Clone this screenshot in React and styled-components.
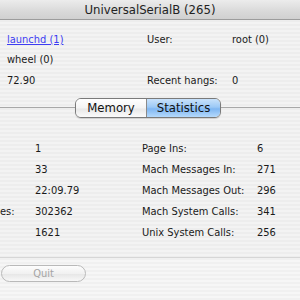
import React from "react";
import styled, { createGlobalStyle } from "styled-components";

const Global = createGlobalStyle`
  html, body {
    margin: 0;
    padding: 0;
    width: 300px;
    height: 300px;
    overflow: hidden;
    background: #ececec;
  }
  * { box-sizing: border-box; }
`;

const FONT = `"DejaVu Sans Condensed", "Liberation Sans", sans-serif`;

const Window = styled.div`
  width: 300px;
  height: 300px;
  display: flex;
  flex-direction: column;
  font-family: ${FONT};
  font-size: 11px;
  color: #1a1a1a;
  background: repeating-linear-gradient(
    to bottom,
    #ededed 0px,
    #ededed 2px,
    #f3f3f3 2px,
    #f3f3f3 4px
  );
`;

const TitleBar = styled.div`
  height: 20px;
  flex-shrink: 0;
  display: flex;
  align-items: center;
  justify-content: center;
  background: linear-gradient(to bottom, #ececec 0%, #d9d9d9 60%, #d0d0d0 100%);
  border-bottom: 1px solid #9c9c9c;
  font-size: 13px;
  color: #222;
`;

const InfoGrid = styled.div`
  display: grid;
  grid-template-columns: ${(p) => p.$cols};
  grid-auto-rows: ${(p) => p.$row}px;
  align-items: center;
  padding-top: ${(p) => p.$top}px;
  white-space: nowrap;
`;

const Cell = styled.span`
  line-height: 1;
`;

const ProcLink = styled.span`
  color: #3d3df2;
  text-decoration: underline;
`;

const TabStrip = styled.div`
  position: relative;
  display: flex;
  justify-content: center;
  margin-top: 7px;
  &::before {
    content: "";
    position: absolute;
    left: 0;
    right: 0;
    top: 9px;
    height: 1px;
    background: #a8a8a8;
  }
`;

const Segments = styled.div`
  position: relative;
  display: flex;
  height: 20px;
  margin-left: -4px;
  border: 1px solid #7a7a7a;
  border-radius: 6px;
  overflow: hidden;
  box-shadow: 0 1px 1px rgba(0, 0, 0, 0.15);
`;

const Segment = styled.div`
  width: ${(p) => p.$w}px;
  display: flex;
  align-items: center;
  justify-content: center;
  font-size: 13px;
  color: #111;
  background: ${(p) =>
    p.$active
      ? "linear-gradient(to bottom, #c9e2fb 0%, #9cc9f6 45%, #7fb6f2 55%, #b5dafc 100%)"
      : "linear-gradient(to bottom, #ffffff 0%, #f4f4f4 50%, #e8e8e8 55%, #fbfbfb 100%)"};
  & + & {
    border-left: 1px solid #8a8a8a;
  }
`;

const Spacer = styled.div`
  flex: 1;
`;

const Footer = styled.div`
  height: 43px;
  flex-shrink: 0;
  border-top: 1px solid #d6d6d6;
  background: repeating-linear-gradient(
    to bottom,
    #f0f0f0 0px,
    #f0f0f0 2px,
    #f6f6f6 2px,
    #f6f6f6 4px
  );
  padding: 7px 0 0 1px;
`;

const QuitButton = styled.button`
  width: 85px;
  height: 17px;
  border: 1px solid #b9b9b9;
  border-radius: 9px;
  background: linear-gradient(to bottom, #fdfdfd 0%, #f1f1f1 50%, #e7e7e7 55%, #f8f8f8 100%);
  font-family: ${FONT};
  font-size: 11px;
  color: #a4a4a4;
  padding: 0;
`;

// the left label column of the window lies outside the frame; only the tail of one label shows
const topRows = [
  [<ProcLink>launchd (1)</ProcLink>, "User:", "root (0)"],
  ["wheel (0)", "", ""],
  ["72.90", "Recent hangs:", "0"],
];

const statRows = [
  ["", "1", "Page Ins:", "6"],
  ["", "33", "Mach Messages In:", "271"],
  ["", "22:09.79", "Mach Messages Out:", "296"],
  ["es:", "302362", "Mach System Calls:", "341"],
  ["", "1621", "Unix System Calls:", "256"],
];

const renderRows = (rows) =>
  rows.flatMap((r, i) => r.map((c, j) => <Cell key={`${i}-${j}`}>{c}</Cell>));

export default function App() {
  return (
    <>
      <Global />
      <Window>
        <TitleBar>UniversalSerialB (265)</TitleBar>
        <InfoGrid $cols="7px 140px 85px 1fr" $row={20.5} $top={9}>
          {renderRows(topRows.map((r) => ["", ...r]))}
        </InfoGrid>
        <TabStrip>
          <Segments>
            <Segment $w={70}>Memory</Segment>
            <Segment $w={74} $active>
              Statistics
            </Segment>
          </Segments>
        </TabStrip>
        <InfoGrid $cols="35px 107px 115px 1fr" $row={21} $top={20}>
          {renderRows(statRows)}
        </InfoGrid>
        <Spacer />
        <Footer>
          <QuitButton disabled>Quit</QuitButton>
        </Footer>
      </Window>
    </>
  );
}
